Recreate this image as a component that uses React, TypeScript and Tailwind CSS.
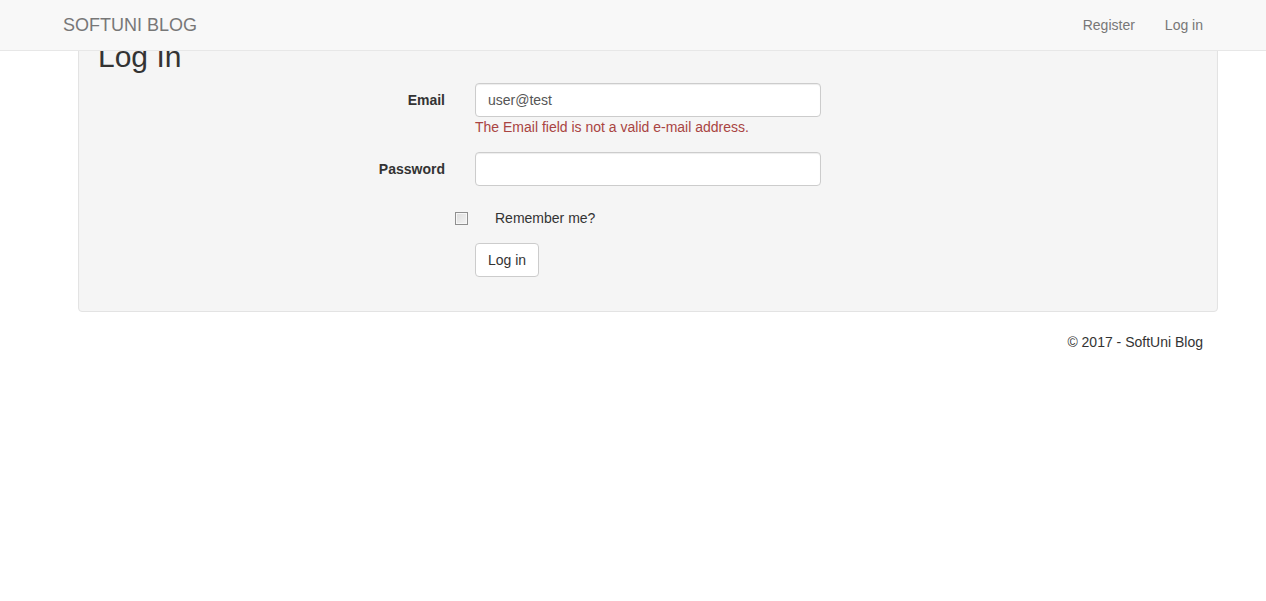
export default function App() {
  return (
    <div className="relative min-h-[601px] bg-white font-['Liberation_Sans',Arial,sans-serif] text-[14px] leading-[20px] text-[#333]">
      {/* fixed navbar lies over the top of the page */}
      <nav className="absolute inset-x-0 top-0 z-10 h-[51px] border-b border-[#e7e7e7] bg-[#f8f8f8]">
        <div className="mx-auto flex h-[50px] w-[1170px] items-center justify-between px-[15px]">
          <span className="text-[18px] leading-[20px] text-[#777]">SOFTUNI BLOG</span>
          <div className="flex">
            <a className="px-[15px] text-[#777]">Register</a>
            <a className="pl-[15px] text-[#777]">Log in</a>
          </div>
        </div>
      </nav>

      <div className="mx-auto w-[1170px] px-[15px]">
        <div className="mb-[20px] ml-[15px] -mr-[15px] rounded-b-[4px] border border-[#e3e3e3] bg-[#f5f5f5] p-[19px] shadow-[inset_0_1px_1px_rgba(0,0,0,0.05)]">
          <h2 className="mt-[20px] mb-[10px] text-[30px] leading-[33px] font-medium text-[#333]">Log In</h2>

          <form className="-mx-[15px] flex flex-col">
            <div className="mb-[15px] flex">
              <label className="w-[377px] px-[15px] pt-[7px] text-right font-bold">Email</label>
              <div className="w-[376px] px-[15px]">
                <input
                  className="block h-[34px] w-full rounded-[4px] border border-[#ccc] bg-white px-[12px] py-[6px] text-[#555] shadow-[inset_0_1px_1px_rgba(0,0,0,0.075)] outline-none"
                  defaultValue="user@test"
                />
                <span className="block text-[#a94442]">The Email field is not a valid e-mail address.</span>
              </div>
            </div>

            <div className="mb-[15px] flex">
              <label className="w-[377px] px-[15px] pt-[7px] text-right font-bold">Password</label>
              <div className="w-[376px] px-[15px]">
                <input
                  type="password"
                  className="block h-[34px] w-full rounded-[4px] border border-[#ccc] bg-white px-[12px] py-[6px] text-[#555] shadow-[inset_0_1px_1px_rgba(0,0,0,0.075)] outline-none"
                />
              </div>
            </div>

            <div className="mb-[15px] flex">
              <div className="ml-[377px] px-[15px] pt-[7px]">
                <label className="relative flex items-center pl-[20px]">
                  <span className="absolute top-[4px] -left-[20px] box-border h-[13px] w-[13px] border border-[#8f8f8f] bg-gradient-to-br from-[#dcdcdc] to-[#f4f4f4] shadow-[inset_0_0_0_1px_#f7f7f7]" />
                  <span className="text-[#333]">Remember me?</span>
                </label>
              </div>
            </div>

            <div className="mb-[15px] flex">
              <div className="ml-[377px] px-[15px]">
                <button
                  type="button"
                  className="h-[34px] rounded-[4px] border border-[#ccc] bg-white px-[12px] py-[6px] text-[#333]"
                >
                  Log in
                </button>
              </div>
            </div>
          </form>
        </div>

        <footer className="flex justify-end">
          <p>© 2017 - SoftUni Blog</p>
        </footer>
      </div>
    </div>
  );
}
